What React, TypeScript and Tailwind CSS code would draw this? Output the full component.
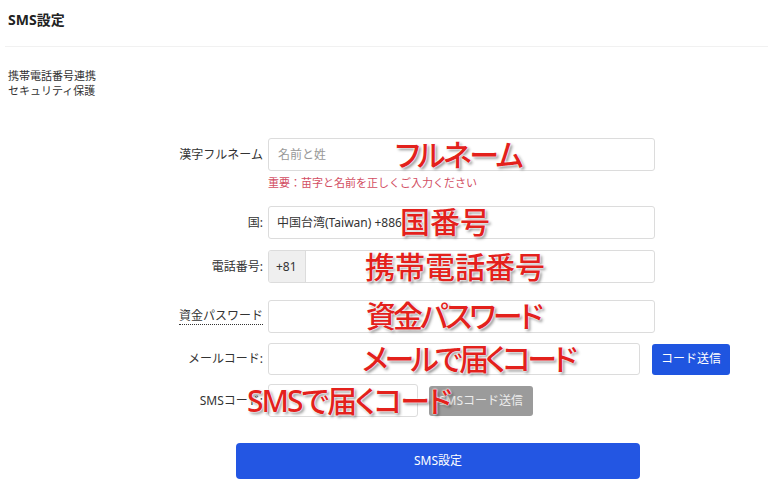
import React from "react";

const ann =
  "absolute whitespace-nowrap font-medium text-[#e3211c] leading-none [font-feature-settings:'palt'] [text-shadow:0_0_2px_#fff,0_0_2px_#fff,0_0_1px_#fff,2px_2px_3px_rgba(0,0,0,0.45)]";

function Label({ children }: { children: React.ReactNode }) {
  return (
    <div className="w-[268px] shrink-0 flex justify-end pr-[5px] text-[12px] text-[#333]">
      {children}
    </div>
  );
}

export default function App() {
  return (
    <div className="relative w-[768px] h-[496px] bg-white overflow-hidden font-['Noto_Sans','Noto_Sans_CJK_JP',sans-serif] text-[#333]">
      <div className="h-[46px] px-2 pt-[11px]">
        <div className="text-[14px] leading-[18px] font-bold text-[#222]">SMS設定</div>
      </div>
      <div className="ml-[5px] h-px bg-[#f1f1f1]" />
      <div className="px-2 pt-[21px] text-[11px] leading-[15px] text-[#333]">
        <div>携帯電話番号連携</div>
        <div>セキュリティ保護</div>
      </div>

      <div className="mt-[40px]">
        <div className="flex items-center">
          <Label>漢字フルネーム</Label>
          <div className="w-[387px] h-[33px] border border-[#dcdcdc] rounded-[3px] flex items-center px-[9px] text-[12px] text-[#999]">
            名前と姓
          </div>
        </div>
        <div className="ml-[268px] mt-[4px] text-[11px] leading-[16px] text-[#d24d62]">
          重要：苗字と名前を正しくご入力ください
        </div>

        <div className="flex items-center mt-[15px]">
          <Label>国:</Label>
          <div className="w-[387px] h-[33px] border border-[#dcdcdc] rounded-[3px] flex items-center px-[8px] text-[12px] text-[#333]">
            中国台湾(Taiwan) +886
          </div>
        </div>

        <div className="flex items-center mt-[11px]">
          <Label>電話番号:</Label>
          <div className="w-[387px] h-[33px] border border-[#dcdcdc] rounded-[3px] flex overflow-hidden">
            <div className="w-[37px] h-full bg-[#efefef] border-r border-[#dcdcdc] flex items-center pl-[7px] text-[12px] text-[#333]">
              +81
            </div>
            <div className="flex-1" />
          </div>
        </div>

        <div className="flex items-center mt-[17px]">
          <Label>
            <span className="border-b border-dotted border-[#333] leading-[16px]">資金パスワード</span>
          </Label>
          <div className="w-[387px] h-[33px] border border-[#dcdcdc] rounded-[3px]" />
        </div>

        <div className="flex items-center mt-[10px]">
          <Label>メールコード:</Label>
          <div className="w-[372px] h-[32px] border border-[#dcdcdc] rounded-[3px]" />
          <button className="ml-[12px] w-[78px] h-[31px] rounded-[3px] bg-[#1f55e0] text-white text-[12px] flex items-center justify-center">
            コード送信
          </button>
        </div>

        <div className="flex items-center mt-[9px]">
          <Label>SMSコード:</Label>
          <div className="w-[150px] h-[33px] border border-[#dcdcdc] rounded-[3px]" />
          <button className="ml-[11px] w-[104px] h-[30px] rounded-[3px] bg-[#9b9b9b] text-[#ececec] text-[12px] flex items-center justify-center">
            SMSコード送信
          </button>
        </div>

        <button className="ml-[236px] mt-[26px] w-[404px] h-[36px] rounded-[4px] bg-[#2356e3] text-white text-[12px] flex items-center justify-center">
          SMS設定
        </button>
      </div>

      <div className={ann + " left-[395px] top-[140px] text-[30px] tracking-[-2.5px]"}>フルネーム</div>
      <div className={ann + " left-[400px] top-[207px] text-[30px]"}>国番号</div>
      <div className={ann + " left-[365px] top-[252px] text-[30px]"}>携帯電話番号</div>
      <div className={ann + " left-[366px] top-[301px] text-[30px] tracking-[-3px]"}>資金パスワード</div>
      <div className={ann + " left-[362px] top-[344px] text-[30px] tracking-[-3.6px]"}>メールで届くコード</div>
      <div className={ann + " left-[247px] top-[386px] text-[30px] tracking-[-2px]"}>SMSで届くコード</div>
    </div>
  );
}
